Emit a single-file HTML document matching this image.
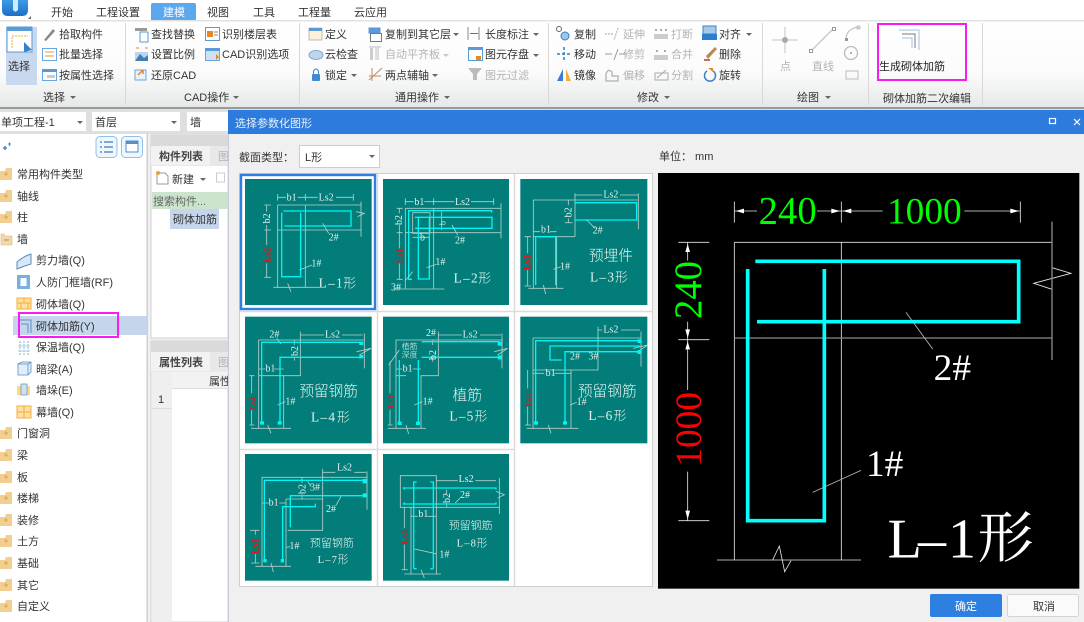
<!DOCTYPE html>
<html><head><meta charset="utf-8"><style>
html,body{margin:0;padding:0;background:#f0f0f0;width:1084px;height:622px;overflow:hidden}
svg{display:block;filter:blur(.3px)}
text{font-family:"Liberation Sans","Noto Sans CJK SC",sans-serif;font-size:11px;fill:#333}
.g{fill:#b4b4b4}
.t text{font-family:"Liberation Serif","Noto Sans CJK SC",serif;fill:#e4f2ee;font-size:30px}
.t .r{fill:#f01010;font-weight:bold;font-size:30px}
.t .c{fill:none;stroke:#00f5f5;stroke-width:4}
.t .w{fill:none;stroke:#b6d0ca;stroke-width:2.5}
.t .big{font-size:40px;font-family:"Liberation Serif","Noto Sans CJK SC",serif}
.t .cn{font-size:38px;font-family:"Noto Sans CJK SC",sans-serif;font-weight:300}
.p text{font-family:"Liberation Serif","Noto Serif CJK SC",serif}
</style></head><body>
<svg width="1084" height="622" viewBox="0 0 1084 622" xmlns="http://www.w3.org/2000/svg">
<defs>
<linearGradient id="rb" x1="0" y1="0" x2="0" y2="1"><stop offset="0" stop-color="#fff"/><stop offset=".6" stop-color="#fbfbfb"/><stop offset="1" stop-color="#e6e8e8"/></linearGradient>
<linearGradient id="lg" x1="0" y1="0" x2="0" y2="1"><stop offset="0" stop-color="#3d9be6"/><stop offset="1" stop-color="#1c6fc6"/></linearGradient>
<g id="fo"><path d="M0-3H5L6-6H12V6H0Z" fill="#f2cf8e"/><path d="M4 0H8M6-2V2" stroke="#d0a860" stroke-width="1"/></g>
<g id="ar"><path d="M0 0H6L3 3Z" fill="#666"/></g>
</defs>
<rect width="1084" height="622" fill="#f0f0f0"/>

<!-- ribbon -->
<rect x="0" y="20" width="1084" height="87" fill="url(#rb)"/>
<rect x="0" y="0" width="1084" height="20" fill="#fff"/>
<rect x="0" y="20" width="1084" height="1.5" fill="#e2e2e2"/>
<rect x="0" y="107" width="1084" height="2" fill="#9a9a9a"/>
<path d="M2 0H28V10Q28 16 22 16H8Q2 16 2 10Z" fill="url(#lg)"/>
<path d="M13 0H18V10L15.500 12L13 10Z" fill="#cfeafc"/>
<path d="M28 19L31 19L31 16Z" fill="#666"/>
<path d="M151 20V5Q151 3 153 3H194Q196 3 196 5V20Z" fill="#5ba8ee"/>
<text x="51" y="16">开始</text><text x="96" y="16">工程设置</text><text x="163" y="16" style="fill:#fff">建模</text><text x="207" y="16">视图</text><text x="253" y="16">工具</text><text x="298" y="16">工程量</text><text x="354" y="16">云应用</text>

<!-- separators -->
<path d="M125.500 23V105M299.500 23V105M548.500 23V105M762.500 23V105M868.500 23V105M982.500 23V105" stroke="#d8d8d8"/>

<!-- select group -->
<rect x="6" y="27" width="31" height="58" fill="#c8d8ee"/>
<rect x="7" y="27" width="25" height="25" fill="#fff" stroke="#5a9ad6" stroke-width="1"/>
<rect x="7" y="27" width="25" height="4" fill="#5a9ad6"/>
<path d="M12 48V36H28" stroke="#f0b020" stroke-dasharray="2 1" fill="none"/>
<path d="M24 42L32 50L24 52Z" fill="#3a7fc8"/>
<text x="8" y="70">选择</text>
<path d="M44 40L53 29L55 31L46 41Z" fill="#888"/>
<text x="59" y="38">拾取构件</text>
<rect x="42.500" y="48.500" width="14" height="12" fill="#fff" stroke="#6aa6dc"/><path d="M45 52H54M45 56H54" stroke="#e09a30"/>
<text x="59" y="58">批量选择</text>
<rect x="42.500" y="69.500" width="14" height="11" fill="#fff" stroke="#6aa6dc"/><rect x="42" y="69" width="15" height="3" fill="#5a9ad6"/><rect x="47" y="75" width="8" height="3" fill="#ccc"/>
<text x="59" y="79">按属性选择</text>
<text x="43" y="101">选择</text><use href="#ar" x="70" y="96"/>

<!-- CAD -->
<rect x="135" y="28" width="12" height="3" fill="#999"/><rect x="140" y="32" width="8" height="10" fill="#fff" stroke="#5a9ad6"/>
<text x="151" y="38">查找替换</text>
<rect x="135" y="52" width="13" height="9" fill="#bcd6ee"/><path d="M135 61L140 54L144 58L148 55V61Z" fill="#3f7fb8"/><path d="M136 48H139M145 48H148" stroke="#e8862a"/>
<text x="151" y="58">设置比例</text>
<rect x="135" y="70" width="11" height="10" fill="#e8f2fa" stroke="#6aa6dc"/><path d="M138 75L143 70M143 70V74" stroke="#e8862a" stroke-width="1.500" fill="none"/>
<text x="151" y="79">还原CAD</text>
<rect x="205.500" y="27.500" width="14" height="13" fill="#fff" stroke="#5a9ad6"/><rect x="207" y="31" width="6" height="6" fill="#e8862a"/><path d="M214 32H218M214 35H218" stroke="#888"/>
<text x="222" y="38">识别楼层表</text>
<rect x="205.500" y="48.500" width="14" height="12" fill="#cfe0f0" stroke="#6aa6dc"/><rect x="205" y="48" width="15" height="3" fill="#5a9ad6"/><path d="M216 54L219 57L216 60Z" fill="#e8862a"/>
<text x="222" y="58">CAD识别选项</text>
<text x="184" y="101">CAD操作</text><use href="#ar" x="233" y="96"/>

<!-- general -->
<rect x="309" y="28" width="13" height="12" fill="#fdf2d8" stroke="#bbb"/><rect x="309" y="28" width="13" height="3" fill="#5a9ad6"/>
<text x="325" y="38">定义</text>
<ellipse cx="316" cy="55" rx="7" ry="4.500" fill="#bcd6ee" stroke="#7fa8cc"/>
<text x="325" y="58">云检查</text>
<rect x="312" y="74" width="8" height="7" rx="1" fill="#3f8ad0"/><path d="M313.500 74V71Q316 67 318.500 71V74" stroke="#3f8ad0" fill="none"/>
<text x="325" y="79">锁定</text><use href="#ar" x="351" y="74"/>
<rect x="368.500" y="27.500" width="12" height="6" fill="#5a9ad6"/><rect x="370.500" y="33.500" width="11" height="8" fill="#fff" stroke="#777"/>
<text x="385" y="38">复制到其它层</text><use href="#ar" x="453" y="33"/>
<rect x="370" y="48" width="3" height="12" fill="#ccc"/><rect x="375" y="48" width="4" height="12" fill="#ddd"/><path d="M369 47H381" stroke="#bbb"/>
<text x="385" y="58" class="g">自动平齐板</text><use href="#ar" x="443" y="54" opacity=".35"/>
<path d="M369 80L382 68M372 68V81M369 76H381" stroke="#c08a60" fill="none"/>
<text x="385" y="79">两点辅轴</text><use href="#ar" x="432" y="74"/>
<path d="M468 27V40M479 27V40" stroke="#888"/><path d="M470 33.500H478" stroke="#2c7fd0"/>
<text x="485" y="38">长度标注</text><use href="#ar" x="533" y="33"/>
<rect x="468.500" y="47.500" width="14" height="13" fill="#fff" stroke="#5a9ad6"/><rect x="468" y="47" width="15" height="3" fill="#5a9ad6"/><rect x="476" y="56" width="5" height="4" fill="#e8862a"/>
<text x="485" y="58">图元存盘</text><use href="#ar" x="533" y="54"/>
<path d="M468 68H482L477 74V80L473 80V74Z" fill="#bbb"/>
<text x="485" y="79" class="g">图元过滤</text>
<text x="395" y="101">通用操作</text><use href="#ar" x="444" y="96"/>

<!-- modify -->
<circle cx="559" cy="29" r="2.500" fill="none" stroke="#666"/><circle cx="565" cy="36" r="4" fill="#9cc6ea" stroke="#3a7fc8"/>
<text x="574" y="38">复制</text>
<path d="M557 54H571M564 47V61" stroke="#2c7fd0" stroke-dasharray="3 2" stroke-width="1.500"/>
<text x="574" y="58">移动</text>
<path d="M563 69V81H557Z" fill="#3a7fc8"/><path d="M566 69V81H571Z" fill="#f0b040"/>
<text x="574" y="79">镜像</text>
<path d="M605 34H614M618 28L614 40" stroke="#aaa" stroke-dasharray="2 1" fill="none"/>
<text x="623" y="38" class="g">延伸</text>
<path d="M605 54H612M614 60L618 49M619 54H626" stroke="#999" fill="none"/>
<text x="623" y="58" class="g">修剪</text>
<path d="M606 81V74Q608 68 612 72L612 76H618V81Z" fill="none" stroke="#bbb" stroke-width="1.500"/>
<text x="623" y="79" class="g">偏移</text>
<rect x="654" y="34" width="14" height="5" fill="#ccc"/><path d="M656 29V31M661 29V31M666 29V31" stroke="#aaa" stroke-width="2"/>
<text x="671" y="38" class="g">打断</text>
<rect x="654" y="55" width="14" height="5" fill="#ccc"/><path d="M657 50V52M665 50V52" stroke="#aaa" stroke-width="2"/>
<text x="671" y="58" class="g">合并</text>
<path d="M655 80V73H668V80ZM657 78L666 70" fill="none" stroke="#aaa"/>
<text x="671" y="79" class="g">分割</text>
<rect x="703" y="26" width="13" height="8" fill="#a8c8e8" stroke="#3a7fc8"/><rect x="702" y="34" width="15" height="6" fill="#2c7fd0"/>
<text x="719" y="38">对齐</text><use href="#ar" x="746" y="33"/>
<path d="M706 56L715 47L717 49L708 59Z" fill="#b88a50"/><path d="M704 60H710" stroke="#b04020" stroke-width="1.500"/>
<text x="719" y="58">删除</text>
<path d="M707 71A5.500 5.500 0 1 0 713 71" fill="none" stroke="#3a7fc8" stroke-width="1.500"/><path d="M708 68H713V72Z" fill="#e8862a"/>
<text x="719" y="79">旋转</text>
<text x="637" y="101">修改</text><use href="#ar" x="664" y="96"/>

<!-- draw -->
<path d="M772 40H798M785 27V53" stroke="#c4c4c4"/><circle cx="785" cy="40" r="3" fill="#aaa"/>
<text x="780" y="70" class="g">点</text>
<path d="M811 51L834 28" stroke="#b8b8b8"/><rect x="809.500" y="49.500" width="3" height="3" fill="#fff" stroke="#999"/><rect x="832.500" y="27.500" width="3" height="3" fill="#fff" stroke="#999"/>
<text x="812" y="70" class="g">直线</text>
<path d="M846 38Q847 29 858 27" fill="none" stroke="#bbb"/><rect x="845" y="38" width="3" height="3" fill="#999"/><rect x="857" y="26" width="3" height="3" fill="#ddd" stroke="#999" stroke-width=".5"/>
<circle cx="851" cy="53" r="6.500" fill="none" stroke="#bbb" stroke-width="1.300"/><circle cx="851" cy="53" r="1" fill="#999"/>
<rect x="846" y="71" width="12" height="8" fill="none" stroke="#bbb"/>
<text x="797" y="101">绘图</text><use href="#ar" x="825" y="96"/>

<path d="M899 30H919V50" fill="none" stroke="#9cc0e4"/><path d="M902 34H915V48" fill="none" stroke="#7a7a7a"/><path d="M902 38H912V48" fill="none" stroke="#9cc0e4"/>
<text x="879" y="70" style="fill:#222">生成砌体加筋</text>
<rect x="878" y="24" width="88" height="56" fill="none" stroke="#f81cf0" stroke-width="2"/>
<text x="883" y="102">砌体加筋二次编辑</text>

<!-- toolbar -->
<rect x="0" y="109" width="1084" height="25" fill="#dfdfdf"/>
<rect x="0" y="112" width="86" height="19" fill="#fff"/><text x="1" y="126">单项工程-1</text><use href="#ar" x="77" y="121" />
<rect x="92" y="112" width="88" height="19" fill="#fff"/><text x="95" y="126">首层</text><use href="#ar" x="171" y="121"/>
<rect x="187" y="112" width="42" height="19" fill="#fff"/><text x="190" y="126">墙</text>

<!-- tree -->
<rect x="0" y="134" width="147" height="488" fill="#fff"/>
<rect x="146.500" y="134" width="1.500" height="488" fill="#cfcfcf"/>
<path d="M3 148H7M5 146V150" stroke="#4a8ad0" stroke-width="1.500"/><path d="M8 144H11M9.500 142.500V146" stroke="#4a8ad0"/>
<rect x="96" y="136.500" width="21" height="21" rx="4" fill="#eef6fe" stroke="#8ec0ec"/><path d="M100 142H102M104 142H113M100 147H102M104 147H113M100 152H102M104 152H113" stroke="#5a8ec4" stroke-width="1.500"/>
<rect x="121.500" y="136.500" width="21" height="21" rx="4" fill="#eef6fe" stroke="#8ec0ec"/><rect x="126" y="141" width="12" height="11" fill="#fff" stroke="#5a8ec4"/><rect x="126" y="141" width="12" height="3" fill="#5a8ec4"/>
<rect x="13" y="316" width="134" height="19" fill="#c5d5ec"/>
<g>
<use href="#fo" y="174"/><text x="17" y="178">常用构件类型</text>
<use href="#fo" y="196"/><text x="17" y="200">轴线</text>
<use href="#fo" y="217"/><text x="17" y="221">柱</text>
<path d="M1 234H4L5 236H12V245H1Z" fill="#f0d8a8" stroke="#d8b880" stroke-width=".6"/><path d="M4 240H9" stroke="#b08a4a"/><text x="17" y="243">墙</text>
<path d="M17 262Q24 256 31 254V264Q24 266 17 269Z" fill="#d8e8f6" stroke="#5a8ec4"/><text x="36" y="264">剪力墙(Q)</text>
<rect x="17" y="275" width="13" height="14" fill="#7ab0e0"/><rect x="20.500" y="278" width="6" height="8" fill="#fff"/><text x="36" y="286">人防门框墙(RF)</text>
<rect x="17" y="298" width="14" height="11" fill="#ffe0a0" stroke="#f0b040"/><path d="M17 303H31M24 298V303M21 303V309M28 303V309" stroke="#f0b040"/><text x="36" y="308">砌体墙(Q)</text>
<path d="M18 320H31V333M21 324H28V333" fill="none" stroke="#5a8ec4"/><text x="36" y="330">砌体加筋(Y)</text>
<path d="M20 341V355M24 341V355M28 341V355" stroke="#7ab0e0" stroke-dasharray="2 1"/><path d="M18 346H30M18 351H30" stroke="#bcd" /><text x="36" y="351">保温墙(Q)</text>
<path d="M18 364L22 362H31V372L28 375H18ZM18 364H28V375M28 364L31 362" fill="#e4eef8" stroke="#5a8ec4" stroke-width=".8"/><text x="36" y="373">暗梁(A)</text>
<rect x="17" y="386" width="13" height="9" fill="#ffd888"/><rect x="21" y="384" width="6" height="11" fill="#cfe2f4" stroke="#5a8ec4" stroke-width=".7"/><text x="36" y="394">墙垛(E)</text>
<rect x="17" y="406" width="14" height="12" fill="#ffe0a0" stroke="#f0b040"/><path d="M17 412H31M24 406V418" stroke="#f0b040"/><text x="36" y="416">幕墙(Q)</text>
<use href="#fo" y="433"/><text x="17" y="437">门窗洞</text>
<use href="#fo" y="455"/><text x="17" y="459">梁</text>
<use href="#fo" y="477"/><text x="17" y="481">板</text>
<use href="#fo" y="498"/><text x="17" y="502">楼梯</text>
<use href="#fo" y="520"/><text x="17" y="524">装修</text>
<use href="#fo" y="541"/><text x="17" y="545">土方</text>
<use href="#fo" y="563"/><text x="17" y="567">基础</text>
<use href="#fo" y="585"/><text x="17" y="589">其它</text>
<use href="#fo" y="606"/><text x="17" y="610">自定义</text>
</g>
<rect x="19" y="313" width="99" height="24" fill="none" stroke="#f81cf0" stroke-width="2"/>

<!-- middle panels -->
<rect x="148" y="134" width="80" height="488" fill="#f0f0f0"/>
<rect x="151" y="135" width="77" height="203" fill="#fff" stroke="#d0d0d0"/>
<rect x="151" y="135" width="77" height="11" fill="#dadada"/>
<rect x="151" y="146" width="77" height="20" fill="#e8e8e8"/>
<rect x="151" y="146" width="59" height="19" fill="#f2f2f2"/>
<text x="159" y="160" style="font-weight:bold;fill:#444">构件列表</text><text x="218" y="160" class="g">图</text>
<path d="M157 173H165L168 176V184H157Z" fill="#fff" stroke="#999"/><circle cx="158" cy="173" r="2" fill="#e8a040"/>
<text x="172" y="183">新建</text><use href="#ar" x="200" y="178"/>
<rect x="216.500" y="173" width="8" height="9" fill="#fff" stroke="#ccc"/>
<rect x="152" y="192" width="76" height="17" fill="#cbe4cb"/><text x="153" y="205" style="fill:#666">搜索构件...</text>
<rect x="170" y="209" width="49" height="20" fill="#c5d5ec"/><text x="173" y="223">砌体加筋</text>
<rect x="151" y="341" width="77" height="281" fill="#fff" stroke="#d0d0d0"/>
<rect x="151" y="341" width="77" height="11" fill="#dadada"/>
<rect x="151" y="352" width="77" height="20" fill="#e8e8e8"/>
<rect x="151" y="352" width="59" height="19" fill="#f2f2f2"/>
<text x="159" y="366" style="font-weight:bold;fill:#444">属性列表</text><text x="218" y="366" class="g">图</text>
<rect x="152" y="372" width="20" height="250" fill="#efefef"/>
<rect x="172" y="372" width="56" height="16" fill="#f2f2f2"/><path d="M172 388.500H228" stroke="#ddd"/><path d="M152 408.500H172" stroke="#ddd"/>
<text x="209" y="385">属性</text><text x="158" y="403">1</text>

<!-- dialog -->
<rect x="228" y="110" width="856" height="512" fill="#f0f0f0"/>
<rect x="228" y="134" width="1" height="488" fill="#c8ccd8"/>
<rect x="228" y="110" width="856" height="24" fill="#2d7bdc"/>
<text x="235" y="127" style="fill:#e8f2fc">选择参数化图形</text>
<rect x="1049.500" y="118.500" width="6" height="5" fill="none" stroke="#fff" stroke-width="1.200"/>
<path d="M1074 119L1080 125M1080 119L1074 125" stroke="#fff" stroke-width="1.200"/>
<text x="239" y="161">截面类型：</text>
<rect x="299.500" y="145.500" width="80" height="22" fill="#fff" stroke="#ccc"/><text x="305" y="161">L形</text><use href="#ar" x="369" y="155"/>
<text x="659" y="160">单位： mm</text>

<!-- grid -->
<rect x="239.500" y="173.500" width="413" height="413" fill="#fff" stroke="#cfcfcf"/>
<path d="M377.500 174V586M514.500 174V586M240 311.500H652M240 449.500H515" stroke="#dcdcdc" stroke-width="1.500"/>
<rect x="241" y="175" width="134" height="134" fill="#fff" stroke="#2f7fe0" stroke-width="2.400"/>

<!-- tile 1 -->
<g class="t" transform="translate(236 170) scale(.33333)">
<rect x="27" y="27" width="380" height="378" fill="#027d79"/>
<path class="w" d="M125 72V92M208 72V92M352 72V92M125 82H150M185 82H245M300 82H352M125 105H375M125 180H375M375 95V200M125 105V352M208 105V352M112 352H250M85 105H105M85 180H105M85 322H105M92 105V125M92 165V225M92 280V322"/>
<path class="w" d="M155 340L165 365M360 125L385 130L365 140"/>
<path class="c" d="M142 123H345V168H145M137 128V320H194V128"/>
<path class="w" d="M260 160L278 190M190 300L228 285"/>
<text x="152" y="92">b1</text><text x="248" y="92">Ls2</text>
<text transform="translate(102 160) rotate(-90)">b2</text>
<text class="r" transform="translate(104 278) rotate(-90)">Ls1</text>
<text x="278" y="212">2#</text><text x="226" y="290">1#</text>
<text x="248" y="352" class="big" textLength="72">L–1</text><text x="322" y="352" class="cn">形</text>
</g>
<!-- tile 2 -->
<g class="t" transform="translate(236 170) scale(.33333)">
<rect x="441" y="27" width="378" height="378" fill="#027d79"/>
<path class="w" d="M508 85V105M593 85V105M773 85V105M508 95H533M565 95H655M705 95H773M508 115H795M508 188H795M795 100V205M508 115V357M593 115V357M470 357H625M482 115H500M482 188H500M482 328H500M490 115V130M490 165V235M490 280V328M530 128V190H582V128H530M530 202H582M617 125V180"/>
<path class="c" d="M767 128V122H518V328H528M537 142H768V175H537M547 140V327H580V140"/>
<path class="w" d="M648 165L665 195M572 293L600 283M510 330L530 305"/>
<text x="535" y="105">b1</text><text x="657" y="105">Ls2</text><text x="552" y="212">b</text>
<text transform="translate(498 165) rotate(-90)">b2</text>
<text transform="translate(628 165) rotate(-90)" style="font-size:24px">b</text>
<text class="r" transform="translate(502 280) rotate(-90)">Ls1</text>
<text x="657" y="220">2#</text><text x="598" y="285">1#</text><text x="465" y="362">3#</text>
<text x="653" y="338" class="big" textLength="72">L–2</text><text x="727" y="338" class="cn">形</text>
</g>
<!-- tile 3 -->
<g class="t" transform="translate(515 170) scale(.33333)">
<rect x="16" y="27" width="381" height="378" fill="#027d79"/>
<path class="w" d="M370 90H55V355M180 70V200M55 200H180M125 200V355M40 355H145M370 70V178M178 75H262M315 75H370M160 90V105M160 145V158M150 158H172M55 185H75M105 185H125M38 200V250M38 300V348M28 200H48M28 348H48"/>
<path class="w" d="M85 345L92 372"/>
<path class="c" d="M178 98H365V150H178M62 345V200H122V345"/>
<path class="w" d="M215 150L240 175M115 298L138 290"/>
<text x="265" y="82">Ls2</text><text x="78" y="188">b1</text>
<text transform="translate(170 142) rotate(-90)">b2</text>
<text class="r" transform="translate(47 300) rotate(-90)">Ls1</text>
<text x="233" y="190">2#</text><text x="135" y="298">1#</text>
<text x="222" y="272" class="cn" style="font-size:44px">预埋件</text>
<text x="225" y="335" class="big" textLength="72">L–3</text><text x="300" y="335" class="cn">形</text>
</g>
<!-- tile 4 -->
<g class="t" transform="translate(236 310) scale(.33333)">
<rect x="27" y="20" width="380" height="380" fill="#027d79"/>
<path class="w" d="M385 90H68V355M193 65V197H68M143 197V355M45 355H165M385 70V175M193 75H265M318 75H380M175 90V105M175 140V152M68 177H88M115 177H143M47 197V250M47 300V345M40 197H55M40 345H55"/>
<path class="w" d="M95 345L105 370M122 85L135 102M125 285L148 275M362 125L405 115L370 135"/>
<path class="c" d="M375 97H77V338M375 142H132V338"/>
<path d="M72 334H84V344H72ZM125 334H137V344H125ZM370 95H382V105H370ZM370 135H382V145H370Z" fill="#00f5f5"/>
<text x="267" y="82">Ls2</text><text x="100" y="82">2#</text><text x="88" y="185">b1</text>
<text transform="translate(186 138) rotate(-90)">b2</text>
<text class="r" transform="translate(58 298) rotate(-90)" style="font-size:26px">Ls1</text>
<text x="148" y="283">1#</text>
<text x="190" y="258" class="cn" style="font-size:44px">预留钢筋</text>
<text x="225" y="335" class="big" textLength="72">L–4</text><text x="303" y="335" class="cn">形</text>
</g>
<!-- tile 5 -->
<g class="t" transform="translate(236 310) scale(.33333)">
<rect x="441" y="20" width="378" height="380" fill="#027d79"/>
<path class="w" d="M800 90H480V355M607 65V197H555V355M480 197H510M455 355H570M798 70V175M607 75H678M732 75H795M590 90V105M590 140V155M480 177H498M530 177H555M462 155V250M462 300V345M455 345H470M458 165L490 120"/>
<path class="w" d="M510 345L518 372M535 285L560 275M775 125L815 115L785 135"/>
<path class="c" d="M557 95H790M557 142H790M490 150V340M547 150V340"/>
<path d="M485 335H497V345H485ZM540 335H552V345H540ZM785 95H797V107H785ZM785 136H797V148H785Z" fill="#00f5f5"/>
<text x="680" y="82">Ls2</text><text x="570" y="78">2#</text><text x="500" y="185">b1</text>
<text transform="translate(600 150) rotate(-90)">b2</text>
<text class="r" transform="translate(473 295) rotate(-90)" style="font-size:26px">Ls1</text>
<text x="560" y="283">1#</text>
<text x="497" y="117" class="cn" style="font-size:24px">植筋</text><text x="497" y="143" class="cn" style="font-size:24px">深度</text>
<text x="650" y="270" class="cn" style="font-size:44px">植筋</text>
<text x="640" y="332" class="big" textLength="72">L–5</text><text x="716" y="332" class="cn">形</text>
</g>
<!-- tile 6 -->
<g class="t" transform="translate(515 310) scale(.33333)">
<rect x="16" y="20" width="381" height="380" fill="#027d79"/>
<path class="w" d="M378 84H54V355M249 50V180H54M168 180V355M35 355H190M378 65V170M249 60H262M318 60H375M54 190H88M118 190H168M38 180V235M38 290V345M30 345H48"/>
<path class="w" d="M100 345L108 370M165 285L185 277M355 115L398 105L365 128"/>
<path class="c" d="M375 92H62V340M375 125H150V340M375 108H105V150H140"/>
<path d="M57 334H69V344H57ZM144 334H156V344H144ZM368 88H380V99H368ZM368 120H380V132H368Z" fill="#00f5f5"/>
<text x="265" y="68">Ls2</text><text x="92" y="198">b1</text><text x="220" y="148">3#</text><text x="165" y="148">2#</text>
<text x="185" y="285">1#</text>
<text class="r" transform="translate(50 290) rotate(-90)" style="font-size:26px">Ls1</text>
<text x="189" y="258" class="cn" style="font-size:44px">预留钢筋</text>
<text x="220" y="330" class="big" textLength="72">L–6</text><text x="296" y="330" class="cn">形</text>
</g>
<!-- tile 7 -->
<g class="t" transform="translate(236 448) scale(.33333)">
<rect x="27" y="18" width="380" height="380" fill="#027d79"/>
<path class="w" d="M393 88H78V355M260 63V247H155M150 153H260M150 153V355M58 355H165M393 70V185M260 73H298M355 73H390M198 88V105M198 138V155M78 165H98M130 165H150M58 247V260M58 318V345M42 247H70M45 345H70"/>
<path class="w" d="M105 345L112 372M215 100L225 115M315 145L300 172M150 298L162 296"/>
<path class="c" d="M388 97H85V340M388 143H163V238M238 167V176H140V340"/>
<path d="M82 333H92V343H82ZM134 333H144V343H134ZM380 93H392V106H380ZM380 136H392V148H380Z" fill="#00f5f5"/>
<text x="303" y="67">Ls2</text><text x="222" y="128">3#</text><text x="98" y="173">b1</text><text x="270" y="192">2#</text><text x="160" y="303">1#</text>
<text transform="translate(208 138) rotate(-90)">b2</text>
<text class="r" transform="translate(68 318) rotate(-90)">Ls1</text>
<text x="222" y="295" class="cn" style="font-size:33px">预留钢筋</text>
<text x="245" y="345" class="big" style="font-size:32px" textLength="58">L–7</text><text x="305" y="345" class="cn" style="font-size:32px">形</text>
</g>
<!-- tile 8 -->
<g class="t" transform="translate(236 448) scale(.33333)">
<rect x="441" y="18" width="378" height="380" fill="#027d79"/>
<path class="w" d="M493 83H601V178H493ZM525 178V378M601 178V378M505 378H615M790 90V198M601 98H665M718 98H780M601 178H790M632 125V138M632 165V178M525 205H545M575 205H600M505 178V240M505 290V365M497 365H515"/>
<path class="w" d="M555 365L565 390M535 303L600 317M780 130L805 140L785 150M672 150L658 165"/>
<path class="c" d="M500 120H780M500 168H780M533 108V362M592 108V362"/>
<path class="c" d="M533 108V102H542M592 108V102H583M533 362H542M592 362H583M505 125V118M780 125V118M505 163V170M780 163V170"/>
<text x="668" y="102">Ls2</text><text x="547" y="207">b1</text><text x="672" y="150">2#</text><text x="610" y="328">1#</text>
<text transform="translate(642 165) rotate(-90)">b2</text>
<text class="r" transform="translate(516 290) rotate(-90)">Ls1</text>
<text x="638" y="243" class="cn" style="font-size:33px">预留钢筋</text>
<text x="662" y="295" class="big" style="font-size:32px" textLength="58">L–8</text><text x="722" y="295" class="cn" style="font-size:32px">形</text>
</g>

<!-- preview -->
<g class="p" transform="translate(656 170) scale(.33333)">
<rect x="6" y="9" width="1264" height="1247" fill="#000"/>
<g fill="none" stroke="#e8e8e8" stroke-width="2.500">
<path d="M235 95V158M556 95V158M1093 95V158M235 123H303M483 123H680M925 123H1093"/>
<path d="M67 217H160M67 509H160M67 1052H160M95 217V272M95 455V660M95 905V1052"/>
<path d="M235 217V1170M556 217V1170M235 217H1188M183 1170H615"/>
<path d="M350 1170L370 1128L386 1205L405 1172M1188 293L1245 310L1133 340L1188 358"/>
</g>
<path d="M235 504H1188M1188 155V570" stroke="#8a8a8a" stroke-width="4" fill="none"/>
<path d="M240 123L264 116V130ZM552 123L526 116V130ZM560 123L586 116V130ZM1089 123L1063 116V130ZM95 222L88 246H102ZM95 504L88 478H102ZM95 514L88 538H102ZM95 1048L88 1022H102Z" fill="#fff"/>
<path class="cy" d="M298 274H1088V455H303M275 297V1052H505V297" fill="none" stroke="#00ffff" stroke-width="11"/>
<path d="M750 427L830 537M470 967L615 901" stroke="#bbb" stroke-width="2.500" fill="none"/>
<text x="308" y="160" style="font-size:116px;fill:#00ff00">240</text>
<text x="693" y="160" style="font-size:112px;fill:#00ff00">1000</text>
<text transform="translate(135 447) rotate(-90)" style="font-size:116px;fill:#00ff00">240</text>
<text transform="translate(135 890) rotate(-90)" style="font-size:112px;fill:#ff0000">1000</text>
<text x="833" y="630" style="font-size:112px;fill:#fff">2#</text>
<text x="630" y="918" style="font-size:112px;fill:#fff">1#</text>
<text x="695" y="1162" style="font-size:168px;fill:#fff">L</text>
<text x="786" y="1162" style="font-size:168px;fill:#fff">–</text>
<text x="876" y="1162" style="font-size:168px;fill:#fff">1</text>
<text x="965" y="1162" style="font-size:168px;fill:#fff">形</text>
</g>

<!-- buttons -->
<rect x="930" y="594" width="72" height="23" rx="2" fill="#2d7fe0"/>
<text x="955" y="610" style="fill:#fff">确定</text>
<rect x="1007.500" y="594.500" width="71" height="22" rx="2" fill="#fafafa" stroke="#d4d4d4"/>
<text x="1033" y="610">取消</text>
</svg>
</body></html>
